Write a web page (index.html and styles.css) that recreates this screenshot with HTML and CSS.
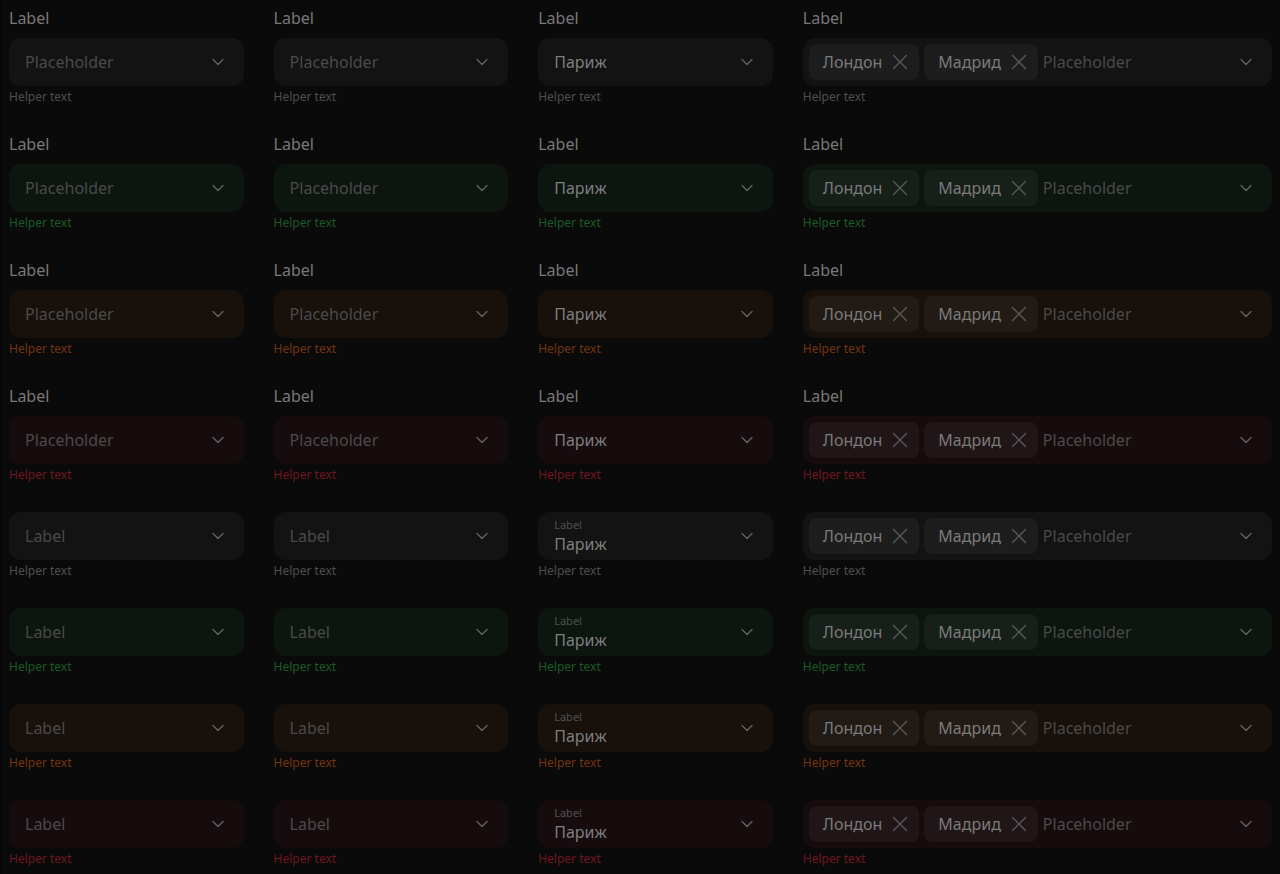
FILE: index.html
```html
<!DOCTYPE html>
<html lang="ru">
<head>
<meta charset="utf-8">
<title>Select states</title>
<link rel="stylesheet" href="styles.css">
</head>
<body>
<svg width="0" height="0" class="defs">
  <defs>
    <symbol id="chev" viewBox="0 0 16 16"><path d="M3 5.5 L8 10.5 L13 5.5" fill="none" stroke="currentColor" stroke-width="1.4" stroke-linecap="round" stroke-linejoin="round"/></symbol>
    <symbol id="x" viewBox="0 0 16 16"><path d="M1.5 1.5 L14.5 14.5 M14.5 1.5 L1.5 14.5" fill="none" stroke="currentColor" stroke-width="1.4" stroke-linecap="round"/></symbol>
  </defs>
</svg>
<main class="grid">
  <!-- Row 1 default -->
  <div class="group"><div class="label">Label</div><div class="field"><span class="ph">Placeholder</span><svg class="chev"><use href="#chev"/></svg></div><div class="helper">Helper text</div></div>
  <div class="group"><div class="label">Label</div><div class="field"><span class="ph">Placeholder</span><svg class="chev"><use href="#chev"/></svg></div><div class="helper">Helper text</div></div>
  <div class="group"><div class="label">Label</div><div class="field"><span class="val">Париж</span><svg class="chev"><use href="#chev"/></svg></div><div class="helper">Helper text</div></div>
  <div class="group"><div class="label">Label</div><div class="field multi"><span class="chip">Лондон<svg class="x"><use href="#x"/></svg></span><span class="chip">Мадрид<svg class="x"><use href="#x"/></svg></span><span class="ph">Placeholder</span><svg class="chev"><use href="#chev"/></svg></div><div class="helper">Helper text</div></div>

  <!-- Row 2 success -->
  <div class="group success"><div class="label">Label</div><div class="field"><span class="ph">Placeholder</span><svg class="chev"><use href="#chev"/></svg></div><div class="helper">Helper text</div></div>
  <div class="group success"><div class="label">Label</div><div class="field"><span class="ph">Placeholder</span><svg class="chev"><use href="#chev"/></svg></div><div class="helper">Helper text</div></div>
  <div class="group success"><div class="label">Label</div><div class="field"><span class="val">Париж</span><svg class="chev"><use href="#chev"/></svg></div><div class="helper">Helper text</div></div>
  <div class="group success"><div class="label">Label</div><div class="field multi"><span class="chip">Лондон<svg class="x"><use href="#x"/></svg></span><span class="chip">Мадрид<svg class="x"><use href="#x"/></svg></span><span class="ph">Placeholder</span><svg class="chev"><use href="#chev"/></svg></div><div class="helper">Helper text</div></div>

  <!-- Row 3 warning -->
  <div class="group warning"><div class="label">Label</div><div class="field"><span class="ph">Placeholder</span><svg class="chev"><use href="#chev"/></svg></div><div class="helper">Helper text</div></div>
  <div class="group warning"><div class="label">Label</div><div class="field"><span class="ph">Placeholder</span><svg class="chev"><use href="#chev"/></svg></div><div class="helper">Helper text</div></div>
  <div class="group warning"><div class="label">Label</div><div class="field"><span class="val">Париж</span><svg class="chev"><use href="#chev"/></svg></div><div class="helper">Helper text</div></div>
  <div class="group warning"><div class="label">Label</div><div class="field multi"><span class="chip">Лондон<svg class="x"><use href="#x"/></svg></span><span class="chip">Мадрид<svg class="x"><use href="#x"/></svg></span><span class="ph">Placeholder</span><svg class="chev"><use href="#chev"/></svg></div><div class="helper">Helper text</div></div>

  <!-- Row 4 error -->
  <div class="group error"><div class="label">Label</div><div class="field"><span class="ph">Placeholder</span><svg class="chev"><use href="#chev"/></svg></div><div class="helper">Helper text</div></div>
  <div class="group error"><div class="label">Label</div><div class="field"><span class="ph">Placeholder</span><svg class="chev"><use href="#chev"/></svg></div><div class="helper">Helper text</div></div>
  <div class="group error"><div class="label">Label</div><div class="field"><span class="val">Париж</span><svg class="chev"><use href="#chev"/></svg></div><div class="helper">Helper text</div></div>
  <div class="group error"><div class="label">Label</div><div class="field multi"><span class="chip">Лондон<svg class="x"><use href="#x"/></svg></span><span class="chip">Мадрид<svg class="x"><use href="#x"/></svg></span><span class="ph">Placeholder</span><svg class="chev"><use href="#chev"/></svg></div><div class="helper">Helper text</div></div>

  <!-- Row 5 default, inner label -->
  <div class="group"><div class="field"><span class="ph">Label</span><svg class="chev"><use href="#chev"/></svg></div><div class="helper">Helper text</div></div>
  <div class="group"><div class="field"><span class="ph">Label</span><svg class="chev"><use href="#chev"/></svg></div><div class="helper">Helper text</div></div>
  <div class="group"><div class="field floating"><span class="stack"><span class="mini">Label</span><span class="val">Париж</span></span><svg class="chev"><use href="#chev"/></svg></div><div class="helper">Helper text</div></div>
  <div class="group"><div class="field multi"><span class="chip">Лондон<svg class="x"><use href="#x"/></svg></span><span class="chip">Мадрид<svg class="x"><use href="#x"/></svg></span><span class="ph">Placeholder</span><svg class="chev"><use href="#chev"/></svg></div><div class="helper">Helper text</div></div>

  <!-- Row 6 success -->
  <div class="group success"><div class="field"><span class="ph">Label</span><svg class="chev"><use href="#chev"/></svg></div><div class="helper">Helper text</div></div>
  <div class="group success"><div class="field"><span class="ph">Label</span><svg class="chev"><use href="#chev"/></svg></div><div class="helper">Helper text</div></div>
  <div class="group success"><div class="field floating"><span class="stack"><span class="mini">Label</span><span class="val">Париж</span></span><svg class="chev"><use href="#chev"/></svg></div><div class="helper">Helper text</div></div>
  <div class="group success"><div class="field multi"><span class="chip">Лондон<svg class="x"><use href="#x"/></svg></span><span class="chip">Мадрид<svg class="x"><use href="#x"/></svg></span><span class="ph">Placeholder</span><svg class="chev"><use href="#chev"/></svg></div><div class="helper">Helper text</div></div>

  <!-- Row 7 warning -->
  <div class="group warning"><div class="field"><span class="ph">Label</span><svg class="chev"><use href="#chev"/></svg></div><div class="helper">Helper text</div></div>
  <div class="group warning"><div class="field"><span class="ph">Label</span><svg class="chev"><use href="#chev"/></svg></div><div class="helper">Helper text</div></div>
  <div class="group warning"><div class="field floating"><span class="stack"><span class="mini">Label</span><span class="val">Париж</span></span><svg class="chev"><use href="#chev"/></svg></div><div class="helper">Helper text</div></div>
  <div class="group warning"><div class="field multi"><span class="chip">Лондон<svg class="x"><use href="#x"/></svg></span><span class="chip">Мадрид<svg class="x"><use href="#x"/></svg></span><span class="ph">Placeholder</span><svg class="chev"><use href="#chev"/></svg></div><div class="helper">Helper text</div></div>

  <!-- Row 8 error -->
  <div class="group error"><div class="field"><span class="ph">Label</span><svg class="chev"><use href="#chev"/></svg></div><div class="helper">Helper text</div></div>
  <div class="group error"><div class="field"><span class="ph">Label</span><svg class="chev"><use href="#chev"/></svg></div><div class="helper">Helper text</div></div>
  <div class="group error"><div class="field floating"><span class="stack"><span class="mini">Label</span><span class="val">Париж</span></span><svg class="chev"><use href="#chev"/></svg></div><div class="helper">Helper text</div></div>
  <div class="group error"><div class="field multi"><span class="chip">Лондон<svg class="x"><use href="#x"/></svg></span><span class="chip">Мадрид<svg class="x"><use href="#x"/></svg></span><span class="ph">Placeholder</span><svg class="chev"><use href="#chev"/></svg></div><div class="helper">Helper text</div></div>
</main>
</body>
</html>
```

FILE: styles.css
```css
html, body {
  margin: 0;
  background: #0a0a0a;
}
body {
  border-left: 1px solid #050505;
  padding: 8px;
  font-family: "Noto Sans", "Open Sans", sans-serif;
  color: #7a7a7a;
  min-height: 858px;
}
.defs {
  position: absolute;
  width: 0;
  height: 0;
}
.grid {
  display: grid;
  grid-template-columns: 1fr 1fr 1fr 2fr;
  column-gap: 30px;
  row-gap: 30px;
}
.group {
  display: flex;
  flex-direction: column;
}
.label {
  font-size: 16px;
  line-height: 20px;
  height: 20px;
  margin-bottom: 10px;
  color: #787878;
}
.field {
  height: 48px;
  box-sizing: border-box;
  border-radius: 12px;
  background: #131313;
  display: flex;
  align-items: center;
  padding: 0 18px 0 16px;
  gap: 8px;
}
.success .field { background: #0d150f; }
.warning .field { background: #17100b; }
.error .field { background: #160c0d; }

.ph {
  flex: 1;
  font-size: 16px;
  line-height: 20px;
  color: #4a4a4a;
  white-space: nowrap;
}
.val {
  font-size: 16px;
  line-height: 20px;
  color: #7e7e7e;
}
.field > .val {
  flex: 1;
}
.chev {
  width: 16px;
  height: 16px;
  color: #626262;
  flex: none;
}
.stack {
  flex: 1;
  display: flex;
  flex-direction: column;
}
.mini {
  font-size: 11px;
  line-height: 14px;
  margin-bottom: 2px;
  color: #505050;
}
.multi {
  padding-left: 6px;
  gap: 5px;
}
.chip {
  flex: none;
  height: 36px;
  box-sizing: border-box;
  display: inline-flex;
  align-items: center;
  gap: 10px;
  padding: 0 11px 0 14px;
  border-radius: 8px;
  background: rgba(255, 255, 255, 0.045);
  font-size: 16px;
  color: #7a7a7a;
}
.x {
  width: 16px;
  height: 16px;
  color: #585858;
}
.multi .chev {
  margin-left: 3px;
}
.helper {
  margin-top: 3px;
  font-size: 12px;
  line-height: 15px;
  color: #4e4e4e;
}
.success .helper { color: #1b5a26; }
.warning .helper { color: #74340f; }
.error .helper { color: #701620; }
```
